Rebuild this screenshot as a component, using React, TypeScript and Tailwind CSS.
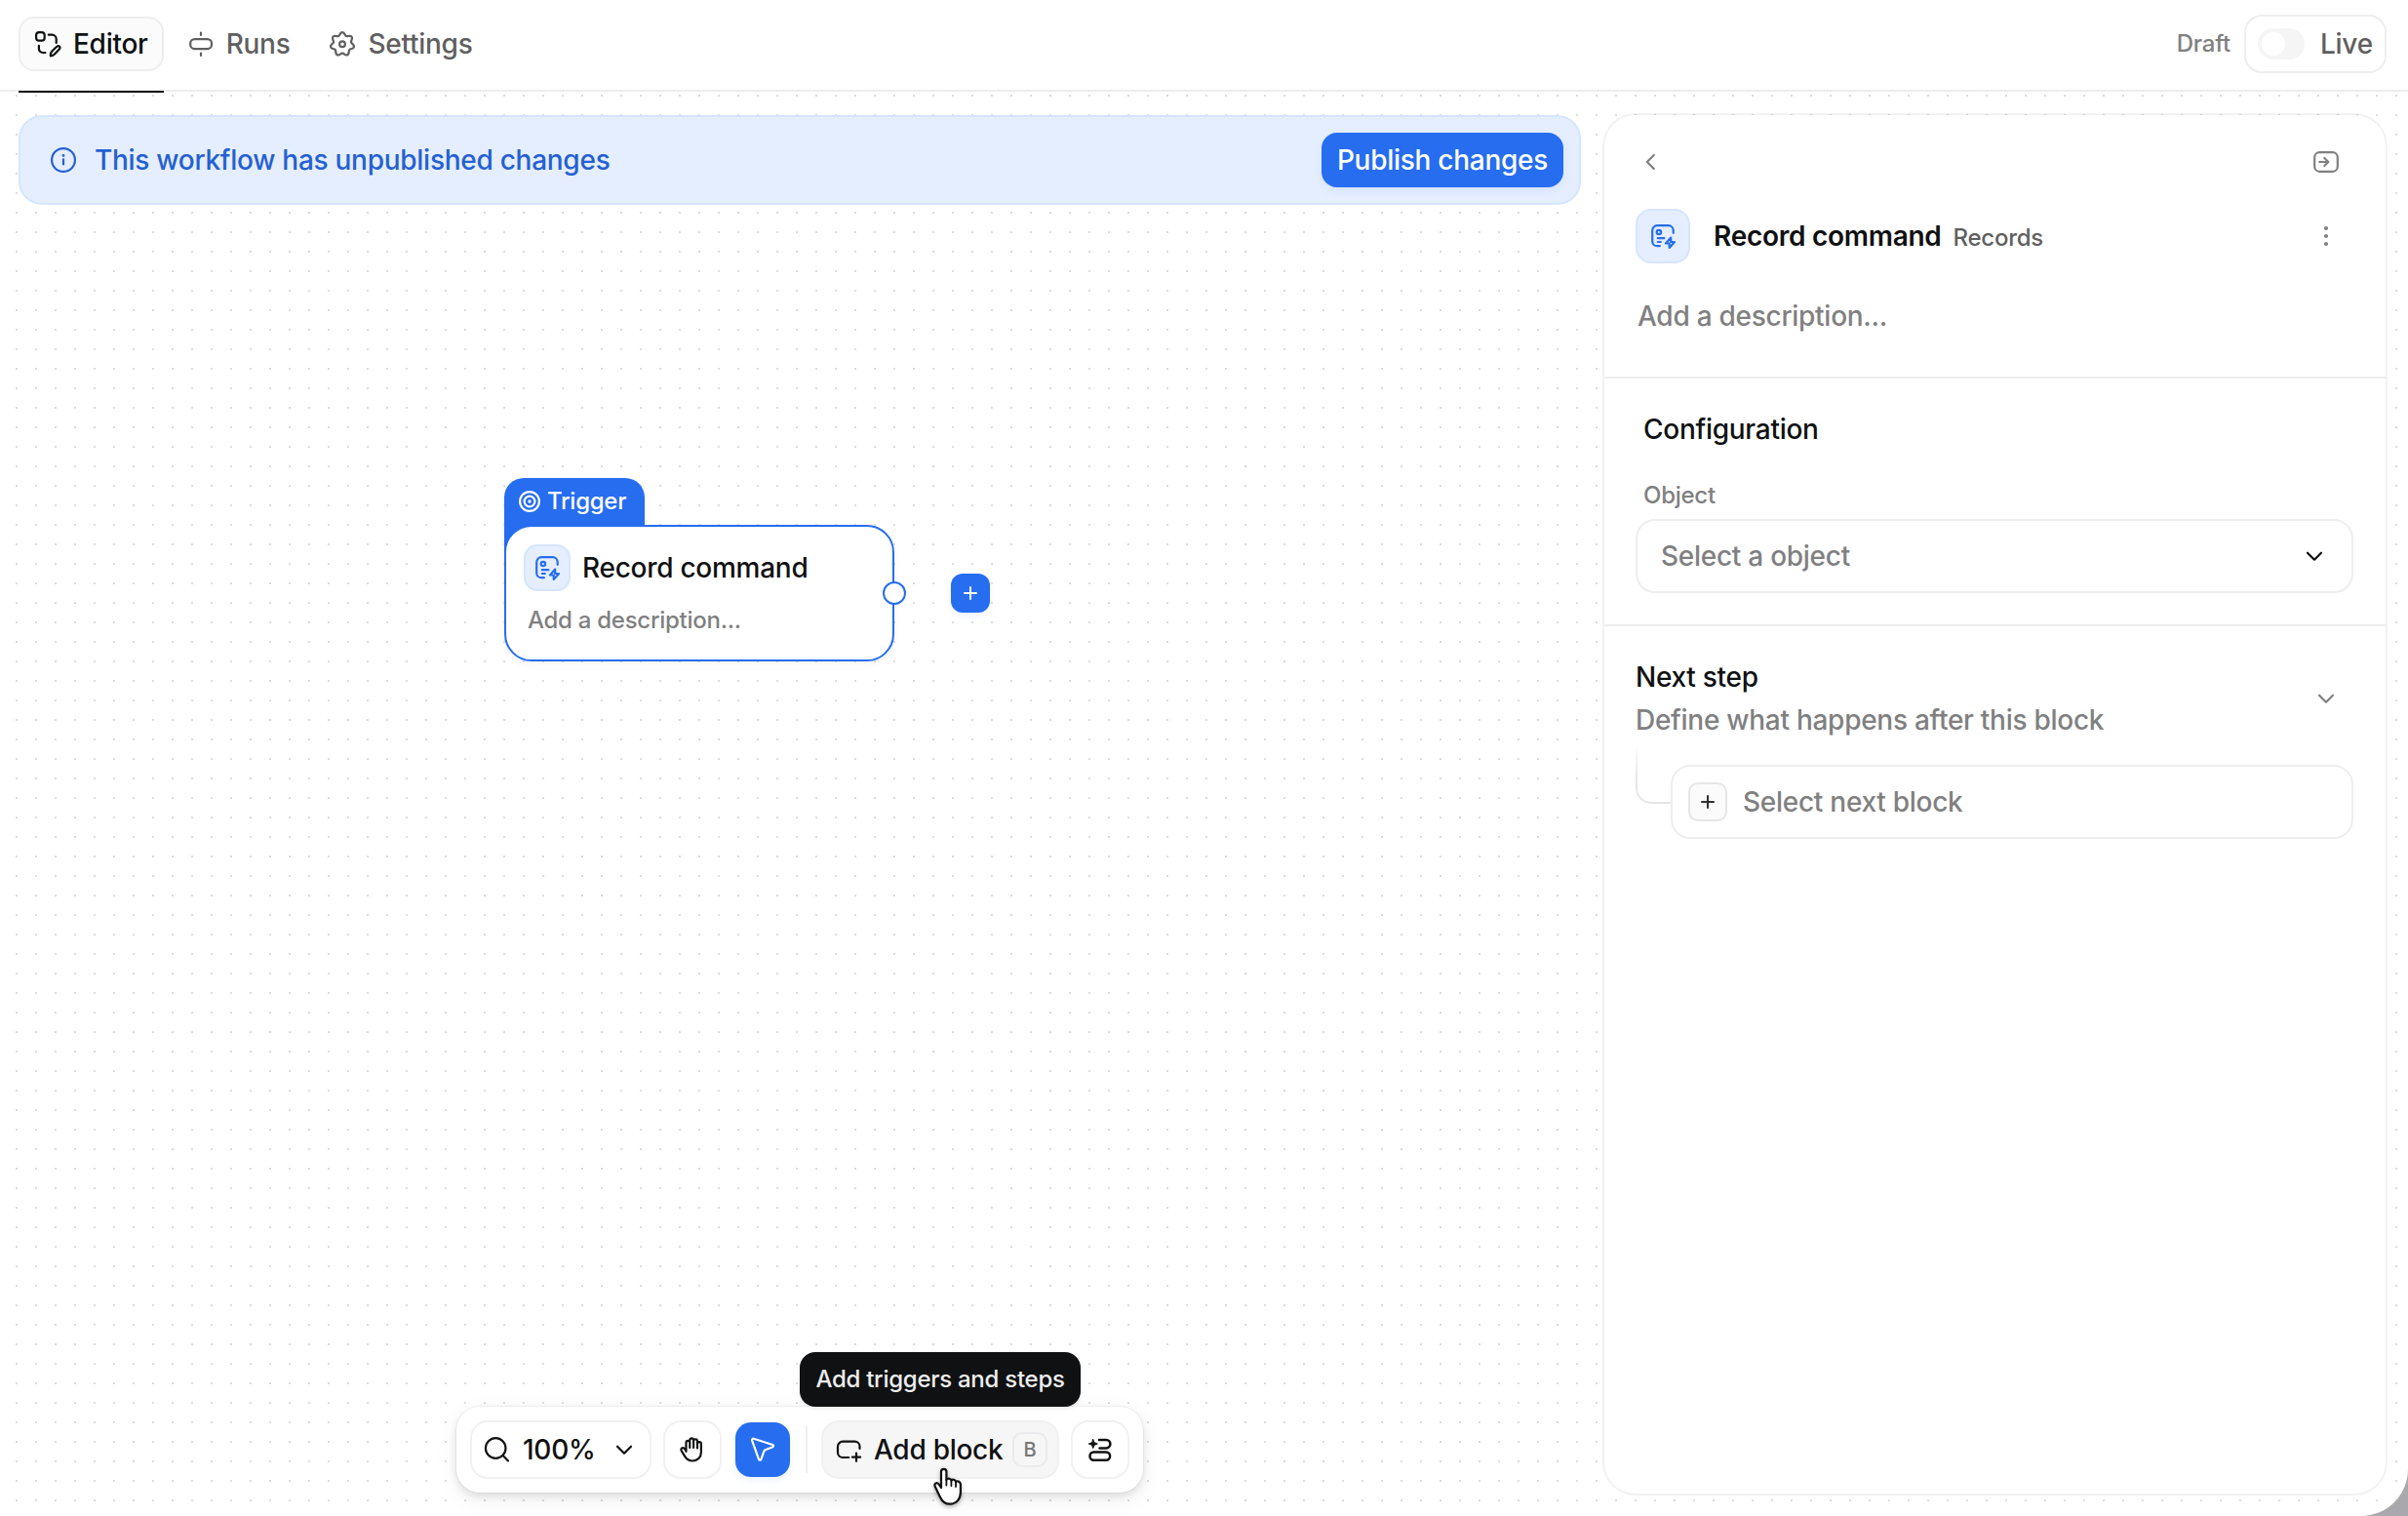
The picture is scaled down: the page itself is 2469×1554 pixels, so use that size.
import React, { useState } from 'react';
import { clsx } from 'clsx';

interface IconProps {
  className?: string;
}

const svgProps = {
  fill: 'none',
  stroke: 'currentColor',
  strokeWidth: 2.2,
  strokeLinecap: 'round' as const,
  strokeLinejoin: 'round' as const,
};

// seven soft lobes around the centre, the first one pointing up
const gearPoints = Array.from({ length: 126 }, (_, i) => {
  const angle = (i / 126) * Math.PI * 2;
  const radius = 10.7 + 1.5 * Math.cos(7 * angle);
  return `${(14 + radius * Math.sin(angle)).toFixed(2)} ${(14.3 - radius * Math.cos(angle)).toFixed(2)}`;
});
const gearPath = `M${gearPoints.join('L')}Z`;

const EditorIcon = ({ className }: IconProps) => (
  <svg viewBox="0 0 28 28" className={clsx('size-7 shrink-0', className)} {...svgProps}>
    <rect x="2.1" y="2.1" width="8.6" height="8.6" rx="3" />
    <path d="M14.8 4.7h3.700a4.200 4.200 0 0 1 4.200 4.200v4" />
    <path d="M4.9 15.800v3.200a4 4 0 0 0 4 4h2.500" />
    <path d="M16.900 26.400c-.4-2.300.2-3.800 1.600-5.200l4.500-4.200c2.400-2 4.600.2 2.700 2.500l-4.200 4.600c-1.300 1.400-2.700 2.200-4.600 2.300z" />
  </svg>
);

const RunsIcon = ({ className }: IconProps) => (
  <svg viewBox="0 0 28 28" className={clsx('size-7 shrink-0', className)} {...svgProps}>
    <rect x="3.200" y="9.100" width="21.800" height="10" rx="4.400" />
    <path d="M14 2.500v2.400M14 23.600v2.400" />
  </svg>
);

const SettingsIcon = ({ className }: IconProps) => (
  <svg viewBox="0 0 28 28" className={clsx('size-7 shrink-0', className)} {...svgProps}>
    <path d={gearPath} />
    <circle cx="14" cy="14.200" r="2.900" />
  </svg>
);

const InfoIcon = ({ className }: IconProps) => (
  <svg viewBox="0 0 28 28" className={clsx('size-7 shrink-0', className)} {...svgProps}>
    <circle cx="14" cy="14" r="11.900" />
    <path d="M14 13.400v5" />
    <circle cx="14" cy="9.400" r="1.400" fill="currentColor" stroke="none" />
  </svg>
);

const RecordIcon = ({ className }: IconProps) => (
  <svg viewBox="0 0 28 28" className={clsx('size-7 shrink-0', className)} {...svgProps}>
    <path d="M24.700 10.800V8.200a5 5 0 0 0-5-5H8.200a5 5 0 0 0-5 5v11a5 5 0 0 0 5 5h2.600" />
    <circle cx="9.900" cy="10" r="2.200" />
    <path d="M8.800 16.200h6.600M8.800 20h3" />
    <path d="M22.200 15.600l-5.300 5.900h3.800v4.500l5.300-6h-3.800z" />
  </svg>
);

const TargetIcon = ({ className }: IconProps) => (
  <svg viewBox="0 0 24 24" className={clsx('size-6 shrink-0', className)} {...svgProps}>
    <circle cx="12" cy="12" r="9.900" />
    <circle cx="12" cy="12" r="5.400" />
    <circle cx="12" cy="12" r="1.700" fill="currentColor" stroke="none" />
  </svg>
);

const PlusIcon = ({ className }: IconProps) => (
  <svg viewBox="0 0 16 16" className={clsx('size-4 shrink-0', className)} {...svgProps}>
    <path d="M8 2v12M2 8h12" strokeWidth="2" />
  </svg>
);

const ChevronDown = ({ className }: IconProps) => (
  <svg viewBox="0 0 20 20" className={clsx('size-5 shrink-0', className)} {...svgProps}>
    <path d="M3 6.700l7 7 7-7" />
  </svg>
);

const ChevronLeft = ({ className }: IconProps) => (
  <svg viewBox="0 0 20 20" className={clsx('size-5 shrink-0', className)} {...svgProps}>
    <path d="M13.800 3l-7 7 7 7" />
  </svg>
);

const CollapseIcon = ({ className }: IconProps) => (
  <svg viewBox="0 0 28 28" className={clsx('size-7 shrink-0', className)} {...svgProps}>
    <rect x="2.200" y="4.200" width="23.600" height="19.600" rx="5" />
    <path d="M7.200 14h8.800M12.300 10l4 4-4 4" />
  </svg>
);

const MoreIcon = ({ className }: IconProps) => (
  <svg viewBox="0 0 28 28" className={clsx('size-7 shrink-0', className)} fill="currentColor">
    <circle cx="14" cy="6" r="2.100" />
    <circle cx="14" cy="14" r="2.100" />
    <circle cx="14" cy="22" r="2.100" />
  </svg>
);

const SearchIcon = ({ className }: IconProps) => (
  <svg viewBox="0 0 28 28" className={clsx('size-7 shrink-0', className)} {...svgProps}>
    <circle cx="12.200" cy="12.500" r="10.300" />
    <path d="M19.700 20l5.300 5.400" />
  </svg>
);

const HandIcon = ({ className }: IconProps) => (
  <svg viewBox="0 0 28 28" className={clsx('size-7 shrink-0', className)} {...svgProps}>
    <path d="M7.500 16V6.800a1.900 1.900 0 0 1 3.800 0V12M11.300 12V4.200a1.900 1.900 0 0 1 3.800 0V12M15.100 5.200a1.900 1.900 0 0 1 3.900 0V12.500M19 8a1.900 1.900 0 0 1 3.900 0v8.500c0 5.500-3.700 9-8.900 9-4 0-6.500-1.800-8.300-5.400l-3.200-5.300a1.900 1.900 0 0 1 3-2.200l2 2.600" />
  </svg>
);

const PointerIcon = ({ className }: IconProps) => (
  <svg viewBox="0 0 28 28" className={clsx('size-7 shrink-0', className)} {...svgProps}>
    <path d="M4.900 2.800l19.300 6.200c1.200.4 1.200 1.900.1 2.300l-7.600 2.900c-.6.300-1 .7-1.300 1.300l-3 8.400c-.4 1.200-2 1.100-2.400 0L3.100 4.700c-.4-1.200.6-2.300 1.800-1.900z" />
  </svg>
);

const AddBlockIcon = ({ className }: IconProps) => (
  <svg viewBox="0 0 28 28" className={clsx('size-7 shrink-0', className)} {...svgProps}>
    <path d="M14.300 22H8a5 5 0 0 1-5-5v-6.300a5 5 0 0 1 5-5h12.500a5 5 0 0 1 5 5V13" />
    <path d="M22 17.500v8.300M17.900 21.700h8.200" />
  </svg>
);

const TemplatesIcon = ({ className }: IconProps) => (
  <svg viewBox="0 0 28 28" className={clsx('size-7 shrink-0', className)} {...svgProps} strokeWidth={2.5}>
    <path d="M13 4h7.200a3.900 3.900 0 0 1 0 8.400h-6.700" />
    <rect x="3.500" y="16.500" width="20.600" height="8.200" rx="3.900" />
    <path
      d="M6.800 3.500l1.300 3.200 3.200 1.300-3.200 1.300-1.300 3.200-1.300-3.200L2.300 8l3.200-1.300z"
      fill="currentColor"
      strokeWidth="1"
    />
  </svg>
);

const HandCursor = ({ className }: IconProps) => (
  <svg viewBox="0 0 32 40" className={className}>
    <path
      d="M9 21V4.500a2.700 2.700 0 0 1 5.400 0V13c.6-2 4.600-1.800 5 .7 1-1.700 4.300-1.200 4.600 1.300 1.300-1.200 4.700-.7 4.900 2.400v8.100c0 7-4 11.900-10.700 12.200-5.200.2-8.200-2.800-10.200-7L2.600 19.500c-1-3 2-4.500 3.900-2.200z"
      fill="#fff"
      stroke="#111"
      strokeWidth="2.200"
      strokeLinejoin="round"
    />
    <path d="M14.400 13v5.500M19.400 14v5M24 15.500v4.500" fill="none" stroke="#111" strokeWidth="1.800" strokeLinecap="round" />
  </svg>
);

const tabs = [
  { id: 'editor', label: 'Editor', icon: EditorIcon },
  { id: 'runs', label: 'Runs', icon: RunsIcon },
  { id: 'settings', label: 'Settings', icon: SettingsIcon },
];

const Header = () => {
  const [activeTab, setActiveTab] = useState('editor');

  return (
    <header className="relative z-10 flex h-[94px] shrink-0 items-center justify-between border-b-2 border-[#eeeeef] bg-white pb-0.5 pl-[19px] pr-[22px]">
      <nav className="flex items-center gap-2">
        {tabs.map(({ id, label, icon: Icon }) => (
          <button
            key={id}
            onClick={() => setActiveTab(id)}
            className={clsx(
              'relative flex h-14 items-center gap-3 rounded-2xl border-2 px-3.5',
              activeTab === id ? 'border-[#eeeeef] bg-[#fbfbfb] text-[#101112]' : 'border-transparent text-[#5f5f60]'
            )}
          >
            <Icon />
            <span>{label}</span>
            {activeTab === id && <span className="absolute -inset-x-0.5 -bottom-6 h-0.5 bg-[#101112]" />}
          </button>
        ))}
      </nav>
      <div className="flex items-center gap-3.5">
        <span className="text-2xl text-[#808081]">Draft</span>
        <div className="flex h-15 w-[146px] items-center gap-4 rounded-[18px] border-2 border-[#eeeeef] pl-3">
          <div className="flex h-8 w-12 items-center rounded-full bg-[#f5f5f6] px-1">
            <div className="size-6 rounded-full bg-white" />
          </div>
          <span className="text-[#5f5f60]">Live</span>
        </div>
      </div>
    </header>
  );
};

const Banner = () => (
  <div className="flex h-[92px] items-center justify-between rounded-3xl border-2 border-[#d6e5ff] bg-[#e5eeff] pl-[30px] pr-4">
    <div className="flex items-center gap-[18px] text-[#2460d2]">
      <InfoIcon />
      <span>This workflow has unpublished changes</span>
    </div>
    <button className="flex h-14 w-[248px] items-center justify-center rounded-2xl bg-[#266df0] text-white shadow-[0_4px_8px_rgba(38,109,240,0.08)]">
      Publish changes
    </button>
  </div>
);

const TriggerNode = () => (
  <div className="absolute left-[517px] top-[396px] w-[400px]">
    <div className="flex h-[84px] w-36 items-start gap-1.5 rounded-t-[20px] bg-[#266df0] pl-3.5 pt-2.5 text-2xl leading-7 text-white">
      <TargetIcon className="mt-0.5" />
      Trigger
    </div>
    <div className="relative -mt-9 h-35 rounded-[28px] border-2 border-[#266df0] bg-white px-[18px] pt-[18px] shadow-[0_4px_8px_rgba(0,0,0,0.04)]">
      <div className="flex items-center gap-3">
        <div className="flex size-12 items-center justify-center rounded-[14px] border-2 border-[#d6e5ff] bg-[#e5eeff] text-[#266df0]">
          <RecordIcon />
        </div>
        <span className="text-[#101112]">Record command</span>
      </div>
      <p className="mt-3.5 pl-1 text-2xl leading-8 text-[#808081]">Add a description...</p>
      <span className="absolute -right-3.5 top-14 size-6 rounded-full border-2 border-[#266df0] bg-white" />
    </div>
    <button className="absolute left-[458px] top-[98px] flex size-10 items-center justify-center rounded-xl bg-[#266df0] text-white shadow-[0_4px_6px_rgba(38,109,240,0.08)]">
      <PlusIcon />
    </button>
  </div>
);

const Toolbar = () => (
  <div className="relative flex h-22 items-center gap-4 rounded-3xl bg-white px-4 text-[#101112] shadow-[0_0_0_1px_rgba(0,0,0,0.04),0_4px_8px_rgba(0,0,0,0.1),0_6px_24px_rgba(0,0,0,0.06)]">
    <button className="flex h-14 w-[182px] items-center rounded-2xl pl-3 shadow-[0_0_0_2px_#f1f1f2]">
      <SearchIcon />
      <span className="ml-3">100%</span>
      <ChevronDown className="ml-auto mr-4" />
    </button>
    <button className="flex size-14 items-center justify-center rounded-2xl shadow-[0_0_0_2px_#f1f1f2]">
      <HandIcon />
    </button>
    <button className="flex size-14 items-center justify-center rounded-2xl bg-[#266df0] text-white shadow-[0_4px_6px_rgba(38,109,240,0.08)]">
      <PointerIcon />
    </button>
    <div className="h-12 w-0.5 bg-[#eeeeef]" />
    <button className="flex h-14 w-60 items-center rounded-2xl bg-[#f6f6f7] pl-3 shadow-[0_0_0_2px_#f1f1f2]">
      <AddBlockIcon />
      <span className="ml-3">Add block</span>
      <kbd className="ml-auto mr-2.5 flex size-9 items-center justify-center rounded-[10px] border-2 border-[#ebebed] font-[Inter] text-xl font-medium text-[#757576]">
        B
      </kbd>
    </button>
    <button className="flex size-14 items-center justify-center rounded-2xl shadow-[0_0_0_2px_#f1f1f2]">
      <TemplatesIcon />
    </button>
    <div className="absolute bottom-22 left-[352px] flex h-14 w-72 items-center justify-center whitespace-nowrap rounded-2xl bg-[#101112] text-2xl text-[#eeeeef] shadow-[0_2px_4px_rgba(0,0,0,0.08)]">
      Add triggers and steps
    </div>
    <HandCursor className="absolute left-[488px] top-[62px] h-10 w-8 drop-shadow-[0_2px_2px_rgba(0,0,0,0.3)]" />
  </div>
);

const SidePanel = () => (
  <aside className="mt-6 mb-[23px] flex w-[801px] shrink-0 flex-col rounded-[32px] bg-white shadow-[0_0_0_2px_rgba(0,0,0,0.05)]">
    <div className="flex h-[270px] flex-col border-b-2 border-[#eeeeef] pl-8 pr-[47px] pt-[34px] text-[#808081]">
      <div className="flex items-center justify-between pl-[5px]">
        <ChevronLeft />
        <CollapseIcon />
      </div>
      <div className="mt-[34px] flex items-center">
        <div className="flex size-14 items-center justify-center rounded-2xl border-2 border-[#d6e5ff] bg-[#e5eeff] text-[#266df0]">
          <RecordIcon />
        </div>
        <span className="ml-6 font-semibold text-[#101112]">Record command</span>
        <span className="ml-3 mt-1 text-2xl text-[#5f5f60]">Records</span>
        <MoreIcon className="ml-auto" />
      </div>
      <p className="mt-9 pl-0.5">Add a description...</p>
    </div>

    <div className="h-[254px] border-b-2 border-[#eeeeef] px-8 pt-[34px]">
      <h3 className="pl-2 text-[#101112]">Configuration</h3>
      <p className="mt-[34px] pl-2 text-2xl text-[#808081]">Object</p>
      <div className="mt-2 flex h-19 w-[736px] items-center justify-between rounded-[20px] border-2 border-[#eeeeef] px-6">
        <span className="text-[#808081]">Select a object</span>
        <ChevronDown className="mr-1 text-[#101112]" />
      </div>
    </div>

    <div className="px-8 pt-[30px]">
      <div className="flex items-center justify-between pr-[19px]">
        <div className="leading-11">
          <h3 className="text-[#101112]">Next step</h3>
          <p className="text-[#808081]">Define what happens after this block</p>
        </div>
        <ChevronDown className="text-[#808081]" />
      </div>
      <div className="flex">
        <div className="mt-0.5 h-[62px] w-9 rounded-bl-2xl border-b-2 border-l-2 border-[#e6e6e7] [mask-image:linear-gradient(transparent,black_60%)]" />
        <div className="mt-6 flex h-19 w-[700px] items-center rounded-[20px] border-2 border-[#eeeeef] pl-4">
          <div className="flex size-10 items-center justify-center rounded-[10px] border-2 border-[#e6e6e7] bg-[#fbfbfb] text-[#303031]">
            <PlusIcon />
          </div>
          <span className="ml-4 text-[#808081]">Select next block</span>
        </div>
      </div>
    </div>
  </aside>
);

const App = () => {
  return (
    <div className="h-[1554px] w-[2469px] bg-[#a9a9ad]">
      <div className="flex h-full flex-col overflow-hidden rounded-br-[48px] bg-white font-['Inter',sans-serif] text-[28px] leading-9 font-medium tracking-[-0.27px]">
        <Header />
        <main className="relative flex flex-1 gap-6 bg-[radial-gradient(circle_at_1px_1px,#dcdcde_1.2px,transparent_0)] bg-[length:20px_20px] bg-[position:16px_3px] pl-[19px]">
          <TriggerNode />
          <div className="flex w-[1602px] flex-col justify-between pb-6 pt-6">
            <Banner />
            <div className="flex justify-center">
              <Toolbar />
            </div>
          </div>
          <SidePanel />
        </main>
      </div>
    </div>
  );
};

export default App;
